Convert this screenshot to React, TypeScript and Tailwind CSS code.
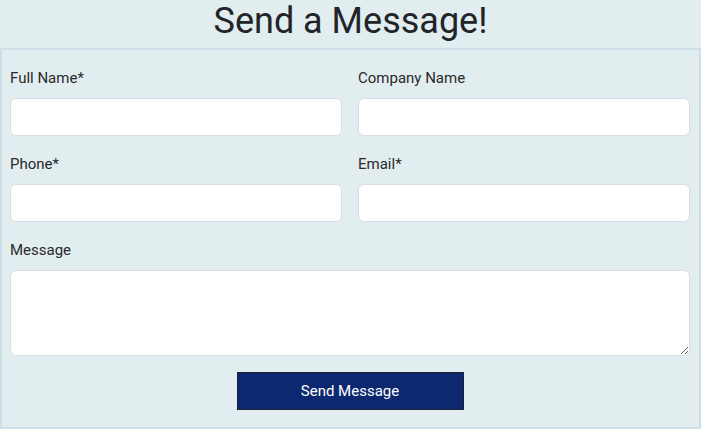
import React from 'react';

const font = { fontFamily: 'Roboto, "Liberation Sans", sans-serif' };

const Field = ({ label }: { label: string }) => (
  <div className="flex flex-col">
    <label className="text-[15px] leading-[20px] text-[#2a2a2a] mb-[10px]">{label}</label>
    <input className="h-[38px] w-full bg-white border border-[#d9dfe3] rounded-[6px] outline-none px-3" />
  </div>
);

export default function App() {
  return (
    <div className="w-[701px] h-[429px] bg-[#e2edf0]" style={font}>
      {/* Title */}
      <h1 className="h-[48px] text-center text-[36px] leading-[42px] text-[#212529]">Send a Message!</h1>

      {/* Form box */}
      <form className="border-2 border-[#cfdfe8] h-[381px] pl-[8px] pr-[9px] pt-[18px]">
        <div className="grid grid-cols-2 gap-x-[16px] gap-y-[18px]">
          <Field label="Full Name*" />
          <Field label="Company Name" />
          <Field label="Phone*" />
          <Field label="Email*" />
          <div className="col-span-2 flex flex-col">
            <label className="text-[15px] leading-[20px] text-[#2a2a2a] mb-[10px]">Message</label>
            <textarea className="h-[86px] w-full bg-white border border-[#d9dfe3] rounded-[6px] outline-none px-3 py-2" />
          </div>
        </div>
        <div className="flex justify-center mt-[16px]">
          <button
            type="button"
            className="w-[227px] h-[38px] bg-[#0b2870] border border-[#1b1f2e] text-white text-[15px]"
          >
            Send Message
          </button>
        </div>
      </form>
    </div>
  );
}
